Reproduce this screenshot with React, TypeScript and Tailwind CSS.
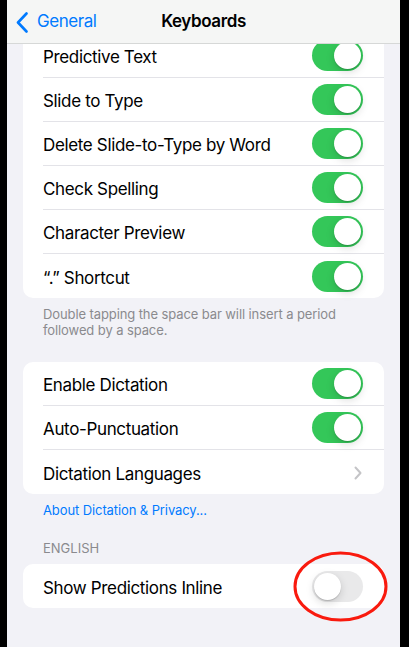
import React from 'react';

const font = { fontFamily: 'Inter, "Noto Sans", sans-serif' };

const Toggle: React.FC<{ on: boolean }> = ({ on }) => (
    <div
        className={`w-[51px] h-[31px] rounded-full p-[2px] flex ${on ? 'bg-[#34c759] justify-end' : 'bg-[#e9e9ea] justify-start'}`}
    >
        <div className="w-[27px] h-[27px] rounded-full bg-white shadow-[0_3px_8px_rgba(0,0,0,0.15),0_1px_1px_rgba(0,0,0,0.16)]"></div>
    </div>
);

const Chevron = () => (
    <svg width="8" height="14" viewBox="0 0 8 14" fill="none">
        <path d="M1.5 1.5L6.5 7L1.5 12.5" stroke="#c4c4c7" strokeWidth="2" strokeLinecap="round" strokeLinejoin="round" />
    </svg>
);

interface RowProps {
    label: string;
    toggle?: boolean;
    chevron?: boolean;
    last?: boolean;
}

const Row: React.FC<RowProps> = ({ label, toggle, chevron, last }) => (
    <div className="pl-5">
        <div className={`h-[44px] flex items-center justify-between pr-[21px] ${last ? '' : 'border-b border-[#e3e3e8]'}`}>
            <span className="text-[17px] leading-[22px] pt-[3px] text-black tracking-[-0.35px]">{label}</span>
            {toggle !== undefined && <Toggle on={toggle} />}
            {chevron && <div className="pr-[1px] pt-[1px]"><Chevron /></div>}
        </div>
    </div>
);

export default function App() {
    return (
        <div className="w-[409px] h-[647px] bg-black flex overflow-hidden" style={font}>
            <div className="ml-[7px] w-[393px] h-full bg-[#f2f2f7] flex flex-col overflow-hidden">
                {/* nav bar */}
                <div className="sticky top-0 z-10 h-[44px] shrink-0 bg-[#f5f6f5] border-b border-[#d6d8d7] flex items-center relative">
                    <div className="flex items-center pl-[9px] pt-[1px] text-[#007aff] text-[17px] tracking-[-0.45px]">
                        <svg width="13" height="21" viewBox="0 0 13 21" fill="none" className="mr-[8px]">
                            <path d="M10.5 1.5L2 10.5L10.5 19.5" stroke="#007aff" strokeWidth="2.6" strokeLinecap="round" strokeLinejoin="round" />
                        </svg>
                        General
                    </div>
                    <div className="absolute inset-0 flex items-center justify-center pt-[1px] pointer-events-none">
                        <span className="text-[17px] font-semibold text-black tracking-[-0.4px]">Keyboards</span>
                    </div>
                </div>

                <div className="-mt-[10px] px-4 flex flex-col">
                    <div className="bg-white rounded-[10px]">
                        <Row label="Predictive Text" toggle />
                        <Row label="Slide to Type" toggle />
                        <Row label="Delete Slide-to-Type by Word" toggle />
                        <Row label="Check Spelling" toggle />
                        <Row label="Character Preview" toggle />
                        <Row label="“.” Shortcut" toggle last />
                    </div>
                    <p className="pt-[8px] px-5 text-[13px] leading-[16px] text-[#8a8a8e] tracking-[-0.1px]">
                        Double tapping the space bar will insert a period followed by a space.
                    </p>

                    <div className="bg-white rounded-[10px] mt-[24px]">
                        <Row label="Enable Dictation" toggle />
                        <Row label="Auto-Punctuation" toggle />
                        <Row label="Dictation Languages" chevron last />
                    </div>
                    <p className="pt-[8px] px-5 text-[13px] leading-[16px] text-[#007aff] tracking-[-0.1px]">About Dictation &amp; Privacy...</p>

                    <p className="mt-[22px] px-5 text-[13px] leading-[16px] text-[#8a8a8e] uppercase">English</p>
                    <div className="bg-white rounded-[10px] mt-[8px] relative">
                        <Row label="Show Predictions Inline" toggle={false} last />
                        <svg className="absolute left-[270px] top-[-13px]" width="96" height="72" viewBox="0 0 96 72" fill="none">
                            <ellipse cx="47.5" cy="35.5" rx="45.5" ry="33.5" stroke="#f91a0e" strokeWidth="3" />
                        </svg>
                    </div>
                </div>
            </div>
        </div>
    );
}
